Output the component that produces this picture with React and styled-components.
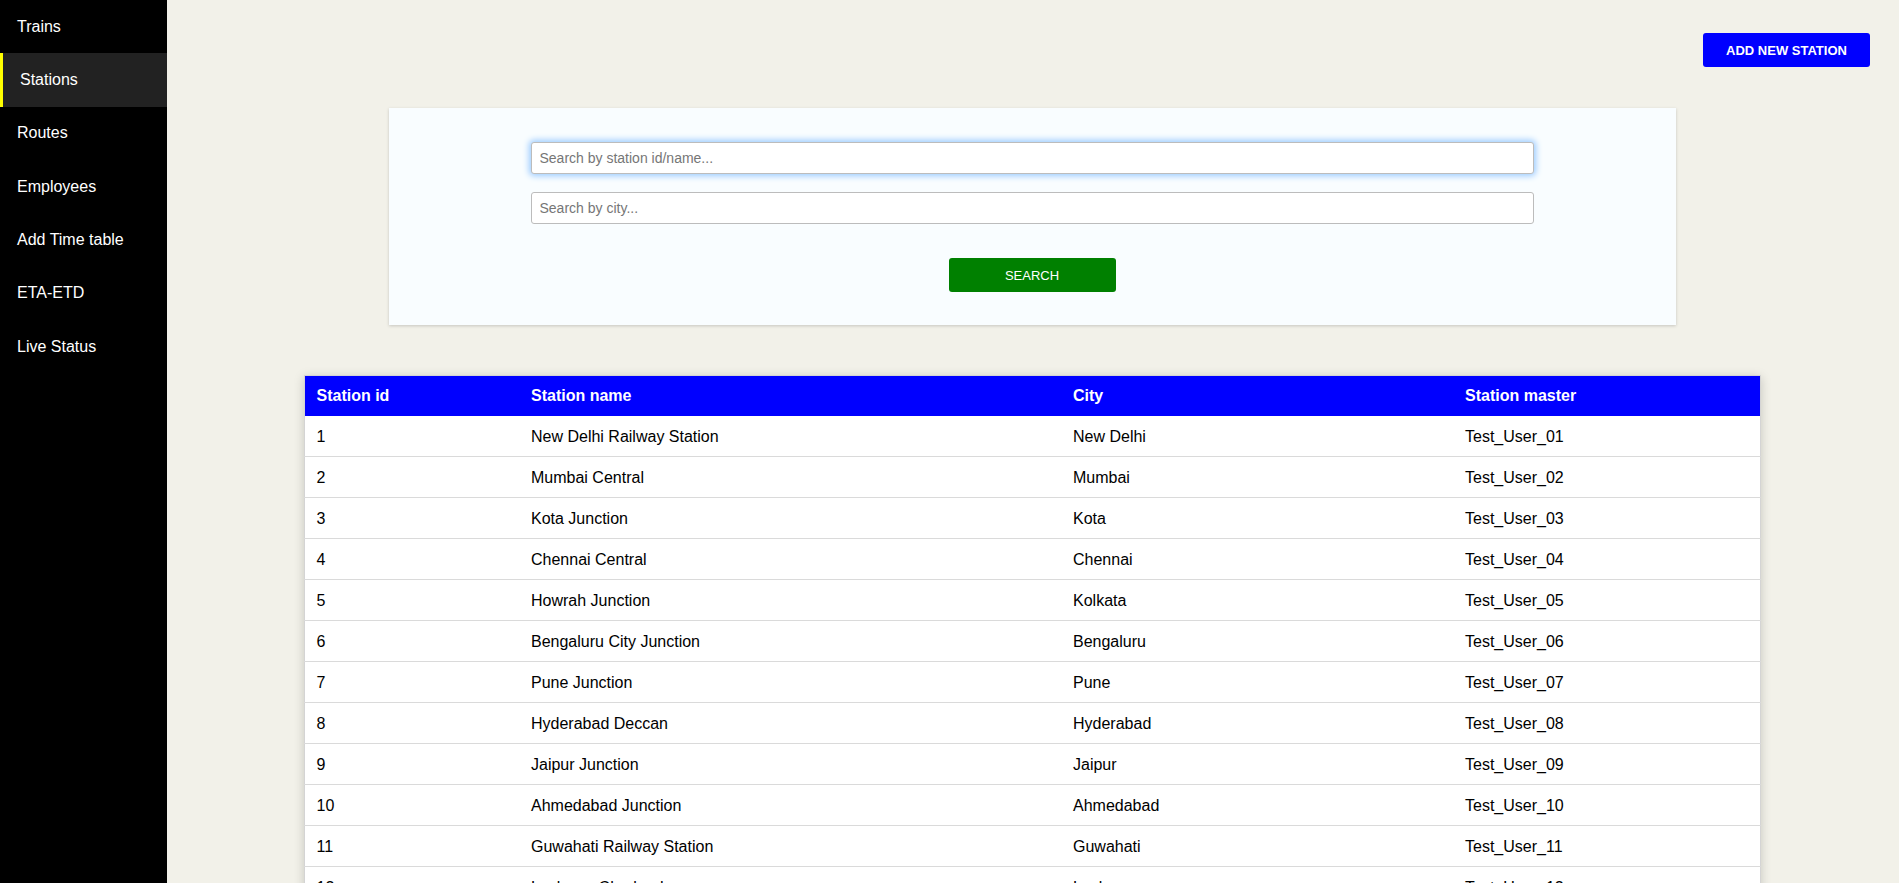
import React from 'react';
import styled, { createGlobalStyle } from 'styled-components';

const GlobalStyle = createGlobalStyle`
  * { box-sizing: border-box; }
  body {
    margin: 0;
    font-family: "Liberation Sans", Arial, sans-serif;
    background: #f2f1e9;
    color: #000;
  }
`;

const Layout = styled.div`
  display: flex;
  min-height: 100vh;
`;

const Sidebar = styled.nav`
  width: 167px;
  flex-shrink: 0;
  background: #000;
  display: flex;
  flex-direction: column;
`;

const NavItem = styled.a`
  display: flex;
  align-items: center;
  height: 53.33px;
  padding-left: 17px;
  border-left: ${p => (p.$active ? '3px solid #ffff00' : '0')};
  background: ${p => (p.$active ? '#222' : 'transparent')};
  color: #fff;
  font-size: 16px;
  text-decoration: none;
  cursor: pointer;
`;

const Main = styled.main`
  flex: 1;
  display: flex;
  flex-direction: column;
  align-items: center;
  padding: 0 2px 40px 0;
`;

const TopBar = styled.div`
  align-self: stretch;
  display: flex;
  justify-content: flex-end;
  padding: 33px 27px 0 0;
`;

const PrimaryButton = styled.button`
  width: 167px;
  height: 34px;
  border: none;
  border-radius: 3px;
  background: ${p => p.$color};
  color: #fff;
  font-family: "Liberation Sans", Arial, sans-serif;
  font-size: 13px;
  font-weight: ${p => (p.$bold ? 700 : 400)};
  text-transform: uppercase;
  cursor: pointer;
`;

const SearchCard = styled.section`
  width: 1287px;
  margin-top: 41px;
  padding: 34px 0 33px;
  background: #f9fdff;
  box-shadow: 0 1px 3px rgba(0, 0, 0, 0.18);
  display: flex;
  flex-direction: column;
  align-items: center;
`;

const SearchInput = styled.input`
  width: 1003px;
  height: 32px;
  margin-bottom: 18px;
  padding: 0 8px;
  border: 1px solid #bcbcbc;
  border-radius: 3px;
  background: #fff;
  font-family: "Liberation Sans", Arial, sans-serif;
  font-size: 14px;
  outline: none;
  box-shadow: ${p => (p.$glow ? '0 0 6px 2px #9ccbff' : 'none')};

  &::placeholder {
    color: #767676;
  }
`;

const SearchActions = styled.div`
  margin-top: 16px;
`;

const Table = styled.table`
  width: 1456px;
  margin-top: 50px;
  border-collapse: collapse;
  table-layout: fixed;
  background: #fff;
  border: 1px solid #d4d4d4;
  box-shadow: 0 2px 10px rgba(0, 0, 0, 0.18);
  font-size: 16px;
`;

const HeadCell = styled.th`
  width: ${p => p.$w}px;
  padding: 11px 12px;
  line-height: 18px;
  background: #0000ff;
  color: #fff;
  font-weight: 700;
  text-align: left;
`;

const Row = styled.tr`
  border-bottom: 1px solid #dadada;
`;

const Cell = styled.td`
  padding: 12px 12px 10px;
  line-height: 18px;
  text-align: left;
`;

const navItems = ['Trains', 'Stations', 'Routes', 'Employees', 'Add Time table', 'ETA-ETD', 'Live Status'];

const columns = [
  { label: 'Station id', width: 215 },
  { label: 'Station name', width: 542 },
  { label: 'City', width: 392 },
  { label: 'Station master', width: 307 },
];

const stations = [
  ['New Delhi Railway Station', 'New Delhi'],
  ['Mumbai Central', 'Mumbai'],
  ['Kota Junction', 'Kota'],
  ['Chennai Central', 'Chennai'],
  ['Howrah Junction', 'Kolkata'],
  ['Bengaluru City Junction', 'Bengaluru'],
  ['Pune Junction', 'Pune'],
  ['Hyderabad Deccan', 'Hyderabad'],
  ['Jaipur Junction', 'Jaipur'],
  ['Ahmedabad Junction', 'Ahmedabad'],
  ['Guwahati Railway Station', 'Guwahati'],
  ['Lucknow Charbagh', 'Lucknow'],
  ['Patna Junction', 'Patna'],
  ['Bhopal Junction', 'Bhopal'],
];

export default function App() {
  return (
    <>
      <GlobalStyle />
      <Layout>
        <Sidebar>
          {navItems.map(item => (
            <NavItem key={item} $active={item === 'Stations'}>{item}</NavItem>
          ))}
        </Sidebar>
        <Main>
          <TopBar>
            <PrimaryButton $color="#0000ff" $bold>Add new station</PrimaryButton>
          </TopBar>
          <SearchCard>
            <SearchInput $glow placeholder="Search by station id/name..." />
            <SearchInput placeholder="Search by city..." />
            <SearchActions>
              <PrimaryButton $color="#008000">Search</PrimaryButton>
            </SearchActions>
          </SearchCard>
          <Table>
            <thead>
              <tr>
                {columns.map(c => (
                  <HeadCell key={c.label} $w={c.width}>{c.label}</HeadCell>
                ))}
              </tr>
            </thead>
            <tbody>
              {stations.map(([name, city], i) => (
                <Row key={name}>
                  <Cell>{i + 1}</Cell>
                  <Cell>{name}</Cell>
                  <Cell>{city}</Cell>
                  <Cell>{`Test_User_${String(i + 1).padStart(2, '0')}`}</Cell>
                </Row>
              ))}
            </tbody>
          </Table>
        </Main>
      </Layout>
    </>
  );
}
